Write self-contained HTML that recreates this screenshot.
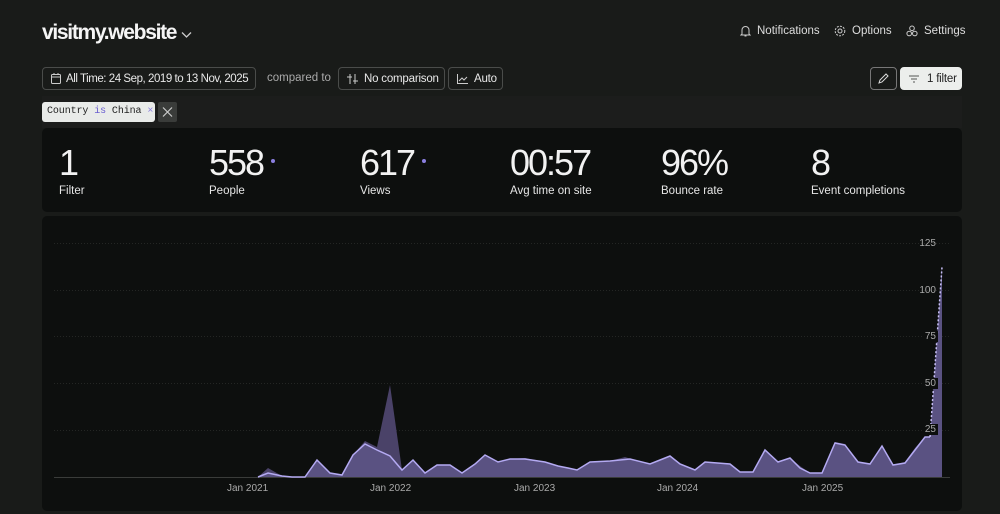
<!DOCTYPE html>
<html><head><meta charset="utf-8"><style>
*{margin:0;padding:0;box-sizing:border-box}
body{width:1000px;height:514px;background:#191b19;font-family:"Liberation Sans",sans-serif;color:#eee;position:relative;overflow:hidden}
.abs{position:absolute;white-space:nowrap}
.btn{position:absolute;height:23px;border:1px solid #4a4c4a;border-radius:4px;font-size:11.5px;color:#e8e8e8;display:flex;align-items:center;padding:0 8px;gap:6px;white-space:nowrap;letter-spacing:-0.2px}
.nav{position:absolute;top:25px;font-size:11.5px;color:#ddd;display:flex;align-items:center;gap:6px;white-space:nowrap}
.card{position:absolute;left:42px;width:920px;background:#0d0f0e;border-radius:5px}
.stat{position:absolute;top:144px;white-space:nowrap}
.stat .n{font-size:36px;font-weight:300;letter-spacing:-2px;color:#f2f2f2;line-height:38px}
.stat .l{font-size:11.5px;color:#e6e6e6;margin-top:3px}
.dot{display:inline-block;width:4px;height:4px;border-radius:50%;background:#8b7fe0;vertical-align:middle;margin-left:8px;position:relative;top:-4px}
.yl{position:absolute;font-size:10px;color:#aaa;right:0}
.xl{position:absolute;top:483px;font-size:10px;color:#aaa}
</style></head><body>
<div class="abs" style="left:42px;top:21px;font-size:21px;font-weight:bold;letter-spacing:-1.3px;color:#f5f5f5">visitmy.website</div>
<svg class="abs" style="left:181px;top:31px" width="11" height="8"><path d="M1 1.5l4.5 4.5 4.5-4.5" stroke="#ccc" fill="none" stroke-width="1.3"/></svg>

<div class="nav" style="left:740px"><svg width="11" height="12" viewBox="0 0 11 12"><path d="M2 9V5a3.5 3.5 0 017 0v4l1 1H1z M4.5 11h2" stroke="#ccc" fill="none"/></svg>Notifications</div>
<div class="nav" style="left:834px"><svg width="12" height="12" viewBox="0 0 12 12"><circle cx="6" cy="6" r="2" stroke="#ccc" fill="none"/><circle cx="6" cy="6" r="4.8" stroke="#ccc" fill="none" stroke-dasharray="2 1.2"/></svg>Options</div>
<div class="nav" style="left:906px"><svg width="12" height="12" viewBox="0 0 12 12"><circle cx="6" cy="3.3" r="2.3" stroke="#ccc" fill="none"/><circle cx="3.2" cy="8.5" r="2.3" stroke="#ccc" fill="none"/><circle cx="8.8" cy="8.5" r="2.3" stroke="#ccc" fill="none"/></svg>Settings</div>

<div class="btn" style="left:42px;top:67px;width:214px;letter-spacing:-0.45px;gap:5px"><svg width="10" height="11" style="flex:none"><rect x="0.5" y="1.5" width="9" height="9" rx="1" stroke="#ccc" fill="none"/><path d="M0.5 4h9M3 0v2M7 0v2" stroke="#ccc"/></svg>All Time: 24 Sep, 2019 to 13 Nov, 2025</div>
<div class="abs" style="left:267px;top:72px;font-size:11.5px;color:#aaa">compared to</div>
<div class="btn" style="left:338px;top:67px;width:107px"><svg width="11" height="10" style="flex:none"><path d="M3 0v10M8 0v10M0 3h5M6 7h5" stroke="#ccc"/></svg>No comparison</div>
<div class="btn" style="left:448px;top:67px;width:55px"><svg width="11" height="10" style="flex:none"><path d="M0.5 0v9.5H11M2 7l3-3 2 2 3-3" stroke="#ccc" fill="none"/></svg>Auto</div>
<div class="btn" style="left:870px;top:67px;width:27px;justify-content:center;padding:0;border-color:#777"><svg width="11" height="11"><path d="M1 10l1-3 6-6 2 2-6 6z" stroke="#ddd" fill="none"/></svg></div>
<div class="btn" style="left:900px;top:67px;width:62px;background:#eceeec;border-color:#eceeec;color:#222;gap:8px"><svg width="10" height="8" style="flex:none"><path d="M0 1h10M2 4h6M4 7h2" stroke="#555"/></svg>1 filter</div>

<div class="abs" style="left:42px;top:96px;width:920px;height:32px;background:#1c1d1c"></div>
<div class="abs" style="left:42px;top:102px;height:20px;width:113px;background:#e9ebe9;border-radius:3px;font-family:'Liberation Mono',monospace;font-size:10px;color:#222;padding:4px 5px;letter-spacing:-0.1px">Country <span style="color:#6a5fd0">is</span> China <span style="color:#8b7fe0">×</span></div>
<div class="abs" style="left:158px;top:102px;width:19px;height:20px;background:#3a3c3a;border-radius:2px"><svg width="19" height="20"><path d="M5 5.5l9 9M14 5.5l-9 9" stroke="#ccc" stroke-width="1.2"/></svg></div>

<div class="card" style="top:128px;height:84px"></div>
<div class="stat" style="left:59px"><div class="n">1</div><div class="l">Filter</div></div>
<div class="stat" style="left:209px"><div class="n">558<span class="dot"></span></div><div class="l">People</div></div>
<div class="stat" style="left:360px"><div class="n">617<span class="dot"></span></div><div class="l">Views</div></div>
<div class="stat" style="left:510px"><div class="n">00:57</div><div class="l">Avg time on site</div></div>
<div class="stat" style="left:661px"><div class="n">96%</div><div class="l">Bounce rate</div></div>
<div class="stat" style="left:811px"><div class="n">8</div><div class="l">Event completions</div></div>

<div class="card" style="top:216px;height:295px"></div>
<svg class="abs" style="left:0;top:0" width="1000" height="514">
<g stroke="#242624" stroke-dasharray="1 2" stroke-width="1">
<path d="M54 243.5H950M54 290.5H950M54 336.5H950M54 383.5H950M54 430.5H950"/>
</g>
<path d="M54 477.5H950" stroke="#3a3c3a"/>
<path d="M258 477L268 468 282 476 292 477 305 477 317 460 330 473 342 475 353 455 365 441 377 447 390 385 402 470 413 460 425 473 437 465 450 465 462 473 475 464 485 455 498 462 510 459 525 458 545 462 558 466 568 468 577 470 590 462 610 461 625 457 640 462 650 464 660 460 670 456 680 464 695 470 705 462 730 464 740 472 753 472 765 450 778 462 790 458 800 466 810 473 822 473 835 442 845 444 858 462 870 464 882 446 893 465 905 462 915 448 925 437 930 437 942 267 942 477Z" fill="#4a4268"/>
<path d="M258 477L268 473 282 476 292 477 305 477 317 460 330 473 342 475 353 455 365 444 377 450 390 456 402 470 413 460 425 473 437 465 450 465 462 473 475 464 485 455 498 462 510 459 525 459 545 462 558 466 568 468 577 470 590 462 610 461 630 459 650 464 660 460 670 456 680 464 695 470 705 462 730 464 740 472 753 472 765 450 778 462 790 458 800 468 810 473 822 473 835 443 845 445 858 462 870 464 882 446 893 465 905 463 915 450 925 437 930 437 942 267 942 477Z" fill="#5a5282"/>
<path d="M258 477L268 473 282 476 292 477 305 477 317 460 330 473 342 475 353 455 365 444 377 450 390 456 402 470 413 460 425 473 437 465 450 465 462 473 475 464 485 455 498 462 510 459 525 459 545 462 558 466 568 468 577 470 590 462 610 461 630 459 650 464 660 460 670 456 680 464 695 470 705 462 730 464 740 472 753 472 765 450 778 462 790 458 800 468 810 473 822 473 835 443 845 445 858 462 870 464 882 446 893 465 905 463 915 450 925 437 930 437" stroke="#b4aaf2" stroke-width="1.5" fill="none"/>
<path d="M930 437L942 267" stroke="#c8c0f5" stroke-width="1.5" stroke-dasharray="2 2" fill="none"/>
</svg>
<div style="position:absolute;left:900px;top:0;width:40px;height:514px">
<div class="yl" style="top:238px;right:4px">125</div>
<div class="yl" style="top:285px;right:4px">100</div>
<div class="yl" style="top:331px;right:2px;background:#0d0f0e;padding:0 2px">75</div>
<div class="yl" style="top:378px;right:2px;background:#0d0f0e;padding:0 2px">50</div>
<div class="yl" style="top:424px;right:2px;background:#0d0f0e;padding:0 2px">25</div>
</div>
<div class="xl" style="left:227px">Jan 2021</div>
<div class="xl" style="left:370px">Jan 2022</div>
<div class="xl" style="left:514px">Jan 2023</div>
<div class="xl" style="left:657px">Jan 2024</div>
<div class="xl" style="left:802px">Jan 2025</div>
</body></html>
